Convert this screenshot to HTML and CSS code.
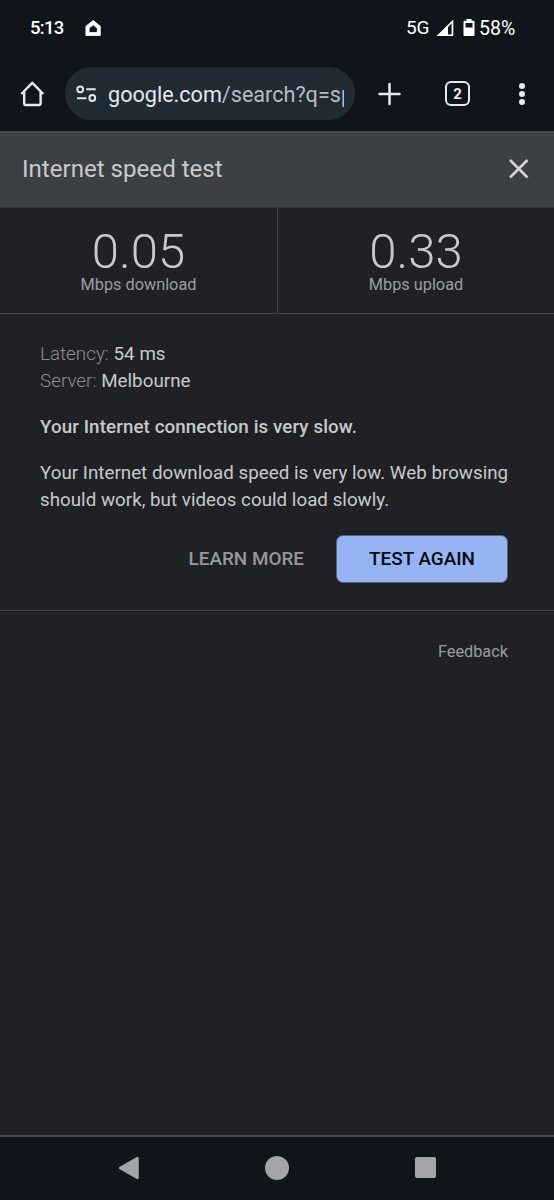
FILE: index.html
```html
<!DOCTYPE html>
<html lang="en">
<head>
<meta charset="utf-8">
<title>Internet speed test</title>
<link rel="stylesheet" href="styles.css">
</head>
<body>
<div class="screen">
  <header class="status">
    <span class="clock">5:13</span>
    <svg class="status-home" width="17" height="17" viewBox="0 0 17 17"><path fill="#fff" stroke="#fff" stroke-width=".8" stroke-linejoin="round" fill-rule="evenodd" d="M8.200.4 15.300 6.300V15.500H.9V6.300ZM8.200 4.800 4.100 8.300v4.200h8.200V8.300Z"/></svg>
    <span class="network">5G</span>
    <svg class="signal" width="18" height="18" viewBox="0 0 18 18"><path fill="#fff" fill-rule="evenodd" d="M17.300.5V17H.5ZM12 8v7.400h3.600V4.200Z"/></svg>
    <svg class="battery" width="12" height="18" viewBox="0 0 12 18"><path fill="#fff" fill-rule="evenodd" d="M3.500 0h5v1.700h2q1 0 1 1V16q0 1-1 1h-9q-1 0-1-1V2.700q0-1 1-1h2ZM2.500 3.900v4.600h7V3.900Z"/></svg>
    <span class="percent">58%</span>
  </header>
  <div class="toolbar">
    <svg class="home" width="26" height="28" viewBox="0 0 26 28"><path d="M1.300 14 12.300 2.800l11 11.200M4.200 11.500v12.300q0 1.200 1.200 1.200h14q1.200 0 1.200-1.200V11.500" fill="none" stroke="#e6e9f2" stroke-width="2.400" stroke-linejoin="round"/></svg>
    <div class="address">
      <svg class="tune" width="22" height="18" viewBox="0 0 22 18"><g fill="none" stroke="#e1e6ed" stroke-width="2"><circle cx="5.200" cy="4.300" r="2.900"/><path d="M11.200 4.300h9.500M2 13.200h9.400"/><circle cx="17.300" cy="13" r="2.900"/></g></svg>
      <div class="url"><span class="domain">google.com</span>/search?q=sp</div>
    </div>
    <svg class="plus" width="24" height="24" viewBox="0 0 24 24"><path d="M11.500 2v20M1.500 12h20" fill="none" stroke="#e6e9f2" stroke-width="2.500" stroke-linecap="round"/></svg>
    <div class="tabs">2</div>
    <div class="dots"><i></i><i></i><i></i></div>
  </div>
  <main>
    <div class="title">
      <h1>Internet speed test</h1>
      <svg class="close" width="22" height="22" viewBox="0 0 22 22"><path d="m2 2 17.500 17.500m0-17.500-17.500 17.500" fill="none" stroke="#d2d4d7" stroke-width="2.600"/></svg>
    </div>
    <section class="metrics">
      <div class="metric"><div class="value">0.05</div><div class="unit">Mbps download</div></div>
      <div class="metric upload"><div class="value">0.33</div><div class="unit">Mbps upload</div></div>
    </section>
    <section class="details">
      <p class="facts"><span class="key">Latency:</span> <span class="fact">54 ms</span><br><span class="key">Server:</span> <span class="fact">Melbourne</span></p>
      <p class="verdict">Your Internet connection is very slow.</p>
      <p class="advice">Your Internet download speed is very low. Web browsing<br>should work, but videos could load slowly.</p>
      <div class="actions"><span class="learn">LEARN MORE</span><button class="again">TEST AGAIN</button></div>
    </section>
    <div class="feedback">Feedback</div>
  </main>
  <nav class="navigation">
    <svg class="back" width="22" height="24" viewBox="0 0 22 24"><path d="M2 12 19.500 2v20Z" fill="#a3a5a8" stroke="#a3a5a8" stroke-width="2.500" stroke-linejoin="round"/></svg>
    <span class="circle"></span>
    <span class="square"></span>
  </nav>
</div>
</body>
</html>
```
FILE: styles.css
```css
* { box-sizing: border-box; }
body { margin: 0; background: #202125; font-family: Roboto, "Liberation Sans", sans-serif; }
h1, p { margin: 0; font-weight: 400; }
svg { display: block; flex: none; }
.screen { width: 554px; height: 1200px; display: flex; flex-direction: column; overflow: hidden; color: #c7c9ce; white-space: nowrap; }

.status { height: 56px; flex: none; display: flex; align-items: center; padding-left: 30px; background: #10151c; color: #fff; font-size: 18.500px; font-weight: 500; line-height: 22px; }
.clock { width: 55px; letter-spacing: -.7px; }
.network { width: 31px; margin-left: 304px; font-size: 19px; letter-spacing: -.1px; font-weight: 450; }
.signal { margin-left: -1px; }
.battery { margin-left: 9px; }
.percent { margin-left: 4px; padding-top: 1px; font-size: 19.500px; font-weight: 450; }

.toolbar { height: 75px; flex: none; display: flex; align-items: center; padding-left: 20px; background: #10151c; color: #e6e9f2; }
.address { width: 290px; height: 53px; margin-left: 19px; border-radius: 27px; padding-left: 10px; display: flex; align-items: center; background: #202b33; }
.url { width: 236px; margin-left: 11px; padding-top: 2px; overflow: hidden; font-size: 21.600px; line-height: 30px; color: #b5bdc6; }
.domain { color: #e4e9ef; }
.plus { margin-left: 23px; }
.tabs { width: 25px; height: 25px; margin-left: 43px; border: 2.500px solid #e6e9f2; border-radius: 6px; font-size: 15px; font-weight: 700; line-height: 22px; text-align: center; }
.dots { width: 6px; margin-left: 49px; display: grid; gap: 2px; }
.dots i { height: 6px; border-radius: 50%; background: #e6e9f2; }

main { flex: 1; background: #202125; }
.title { height: 77px; padding: 0 24px 2px 22px; display: flex; align-items: center; justify-content: space-between; background: #3c4043; border-top: 2px solid #45494d; border-bottom: 1px solid #34373a; }
.title h1 { font-size: 24.100px; line-height: 30px; }
.close { margin-bottom: 1px; }
.metrics { height: 106px; display: grid; grid-template-columns: 1fr 1fr; border-bottom: 1px solid #414347; }
.metric { text-align: center; padding-top: 21px; }
.upload { border-left: 1px solid #414347; }
.value { font-size: 49px; font-weight: 300; line-height: 46px; }
.unit { font-size: 16.300px; line-height: 20px; color: #9b9da1; }
.details { height: 297px; padding: 27px 46px 0 40px; border-bottom: 1px solid #414347; font-size: 18.750px; line-height: 27px; }
.facts { letter-spacing: .04px; }
.key { color: #8d9095; font-weight: 300; }
.verdict { margin-top: 19px; font-weight: 500; letter-spacing: .1px; }
.advice { margin-top: 19px; letter-spacing: .02px; }
.actions { margin-top: 21px; display: flex; align-items: center; justify-content: flex-end; gap: 32px; }
.learn { padding-bottom: 2px; color: #96989c; font-size: 18.900px; font-weight: 500; }
.again { width: 172px; height: 48px; padding: 0 0 2px; border: 1px solid #53647f; border-radius: 7px; background: #96b4f4; color: #080b10; font: 500 18.900px Roboto, "Liberation Sans", sans-serif; }
.feedback { padding: 30px 46px 0 0; font-size: 16.300px; line-height: 22px; color: #9b9da1; text-align: right; }

.navigation { height: 65px; flex: none; display: flex; align-items: center; padding: 0 0 2px 118px; border-top: 2px solid #43474c; background: #10151c; }
.circle { width: 24px; height: 24px; margin-left: 125px; border-radius: 50%; background: #a3a5a8; }
.square { width: 21px; height: 21px; margin-left: 126px; border-radius: 2px; background: #a3a5a8; }
```
